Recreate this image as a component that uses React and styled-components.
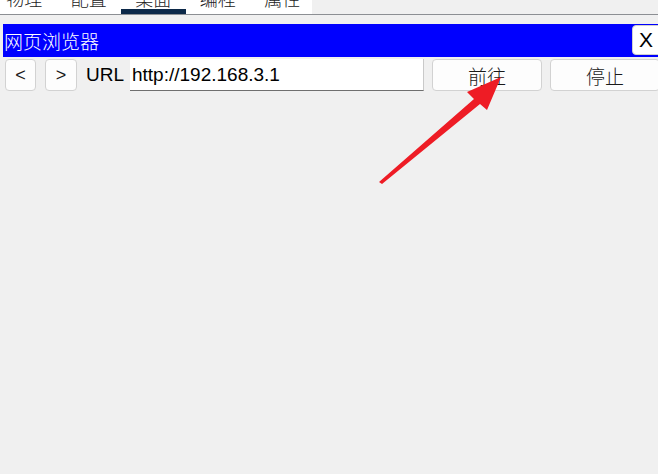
import React from "react";
import styled, { createGlobalStyle } from "styled-components";

const Global = createGlobalStyle`
  html, body { margin: 0; padding: 0; background: #f0f0f0; overflow: hidden; }
  body { font-family: "Liberation Sans", Arial, sans-serif; }
`;

const Page = styled.div`
  position: relative;
  width: 658px;
  height: 474px;
  overflow: hidden;
  background: #f0f0f0;
`;

const TabStrip = styled.div`
  height: 14px;
  border-bottom: 1px solid #8c8f93;
  display: flex;
`;

const TabGroup = styled.div`
  display: flex;
  margin-left: -8px;
  width: 320px;
  background: #ffffff;
  height: 14px;
  overflow: hidden;
`;

const Tab = styled.div`
  width: 64.5px;
  flex: none;
  box-sizing: border-box;
  height: 14px;
  border-bottom: ${(p) => (p.$active ? "5px solid #0c2949" : "0")};
  display: flex;
  justify-content: center;
  font-family: "Noto Sans CJK SC", sans-serif;
  font-weight: 300;
  font-size: 18px;
  line-height: 18px;
  color: #222;
  overflow: hidden;
  span { margin-top: -11px; }
`;

const Window = styled.div`
  margin-top: 9px;
  margin-left: 3px;
`;

const TitleBar = styled.div`
  height: 33px;
  background: #0000ff;
  display: flex;
  align-items: flex-start;
  justify-content: space-between;
`;

const Title = styled.div`
  color: #ffffff;
  font-family: "Noto Sans CJK SC", sans-serif;
  font-weight: 300;
  font-size: 19px;
  line-height: 33px;
  padding-left: 1px;
`;

const CloseBtn = styled.div`
  margin-top: 1px;
  margin-right: -10px;
  width: 36px;
  height: 30px;
  box-sizing: border-box;
  background: #ffffff;
  border: 1px solid #d0d0d0;
  border-radius: 4px;
  font-family: "Liberation Sans", Arial, sans-serif;
  font-size: 21px;
  line-height: 28px;
  padding-left: 6px;
  color: #000;
`;

const NavRow = styled.div`
  margin-top: 2px;
  padding-left: 2px;
  display: flex;
  align-items: flex-start;
  gap: 8px;
  width: 700px;
`;

const Btn = styled.div`
  flex: none;
  width: ${(p) => p.$w}px;
  margin-left: ${(p) => p.$ml || 0}px;
  height: 32px;
  box-sizing: border-box;
  background: #fdfdfd;
  border: 1px solid #d2d2d2;
  border-radius: 4px;
  display: flex;
  align-items: center;
  justify-content: center;
  font-family: ${(p) => (p.$cjk ? `"Noto Sans CJK SC", sans-serif` : `"Liberation Sans", Arial, sans-serif`)};
  font-weight: ${(p) => (p.$cjk ? 300 : 400)};
  font-size: ${(p) => (p.$cjk ? 19 : 18)}px;
  color: #1a1a1a;
`;

const Label = styled.div`
  flex: none;
  width: 36px;
  margin-left: 1px;
  height: 32px;
  line-height: 32px;
  font-family: "Liberation Sans", Arial, sans-serif;
  font-size: 19px;
  color: #000;
`;

const UrlInput = styled.div`
  flex: none;
  width: 294px;
  height: 32px;
  box-sizing: border-box;
  background: #ffffff;
  border-bottom: 1px solid #6f6f6f;
  border-right: 1px solid #c9c9c9;
  padding-left: 2px;
  line-height: 31px;
  font-family: "Liberation Sans", Arial, sans-serif;
  font-size: 19px;
  color: #000;
`;

const ArrowLayer = styled.svg`
  position: absolute;
  left: 0;
  top: 0;
  pointer-events: none;
`;

const tabs = ["物理", "配置", "桌面", "编程", "属性"];

export default function App() {
  return (
    <Page>
      <Global />
      <TabStrip>
        <TabGroup>
          {tabs.map((t, i) => (
            <Tab key={t} $active={i === 2}>
              <span>{t}</span>
            </Tab>
          ))}
        </TabGroup>
      </TabStrip>
      <Window>
        <TitleBar>
          <Title>网页浏览器</Title>
          <CloseBtn>X</CloseBtn>
        </TitleBar>
        <NavRow>
          <Btn $w={31}>&lt;</Btn>
          <Btn $w={32} $ml={1}>&gt;</Btn>
          <Label>URL</Label>
          <UrlInput>http://192.168.3.1</UrlInput>
          <Btn $w={110} $cjk>前往</Btn>
          <Btn $w={110} $cjk>停止</Btn>
        </NavRow>
      </Window>
      <ArrowLayer width="658" height="474" viewBox="0 0 658 474">
        <polygon
          points="379,182 474,99 467,92 501,77 487,110 480,104 382,184"
          fill="#ee1c25"
        />
      </ArrowLayer>
    </Page>
  );
}
